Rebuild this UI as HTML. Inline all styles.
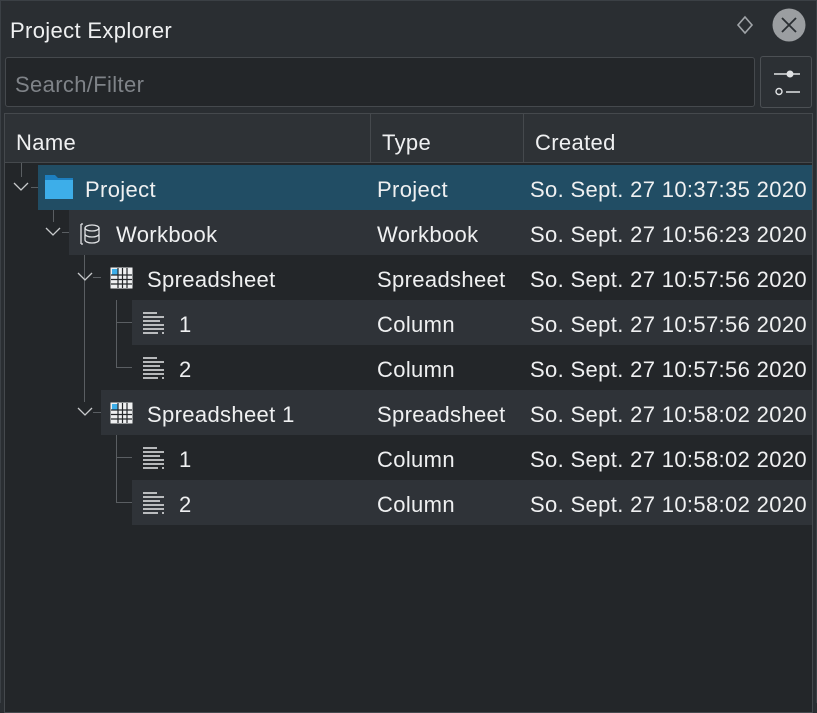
<!DOCTYPE html>
<html><head><meta charset="utf-8"><style>
*{margin:0;padding:0;box-sizing:border-box}
body{width:817px;height:703px;background:#2a2e32;font-family:"Liberation Sans","DejaVu Sans",sans-serif;color:#eff0f1;position:relative;overflow:hidden}
.a{position:absolute}
.t{font-size:22px;letter-spacing:0.35px;white-space:nowrap;line-height:45px;margin-top:2px}
.ln{position:absolute;background:#5a5e62}
</style></head><body>
<div class="a" style="left:0;top:0;width:817px;height:703px;border:1px solid #3b4045;border-bottom:none"></div>
<div class="a t" style="left:10px;top:6px">Project Explorer</div>
<svg class="a" style="left:735px;top:15px" width="20" height="20"><path d="M10 2 L17 10 L10 18 L3 10 Z" fill="none" stroke="#a0a4a8" stroke-width="1.6"/></svg>
<svg class="a" style="left:772px;top:8px" width="34" height="34"><circle cx="17" cy="17" r="16.5" fill="#9b9ea1"/><path d="M10 10 L24 24 M24 10 L10 24" stroke="#2a2e32" stroke-width="1.8"/></svg>
<div class="a" style="left:5px;top:57px;width:750px;height:50px;background:#232629;border:1px solid #45494d;border-radius:3px"></div>
<div class="a t" style="left:15px;top:60px;color:#7f8388">Search/Filter</div>
<div class="a" style="left:760px;top:56px;width:52px;height:52px;background:#2c3034;border:1px solid #4c5054;border-radius:3px"></div>
<svg class="a" style="left:770px;top:66px" width="34" height="34"><path d="M4 8 H30 M16 26 H30" stroke="#e0e2e4" stroke-width="1.6"/><circle cx="20" cy="8" r="3.5" fill="#e0e2e4"/><circle cx="9" cy="25.5" r="3" fill="none" stroke="#e0e2e4" stroke-width="1.4"/></svg>
<div class="a" style="left:4px;top:113px;width:809px;height:600px;background:#232629;border:1px solid #45494d"></div>
<div class="a" style="left:5px;top:114px;width:807px;height:49px;background:#2e3236;border-bottom:1px solid #45494d"></div>
<div class="a" style="left:370px;top:114px;width:1px;height:49px;background:#45494d"></div>
<div class="a" style="left:523px;top:114px;width:1px;height:49px;background:#45494d"></div>
<div class="a t" style="left:16px;top:118px">Name</div>
<div class="a t" style="left:382px;top:118px">Type</div>
<div class="a t" style="left:535px;top:118px">Created</div>
<div class="a" style="left:38px;top:165px;width:774px;height:45px;background:#214d64"></div>
<div class="a" style="left:69px;top:210px;width:743px;height:45px;background:#2f3338"></div>
<div class="a" style="left:132px;top:300px;width:680px;height:45px;background:#2f3338"></div>
<div class="a" style="left:101px;top:390px;width:711px;height:45px;background:#2f3338"></div>
<div class="a" style="left:132px;top:480px;width:680px;height:45px;background:#2f3338"></div>
<div class="ln" style="left:21px;top:163px;width:1px;height:14px"></div>
<div class="ln" style="left:31px;top:187px;width:7px;height:1px"></div>
<div class="ln" style="left:53px;top:210px;width:1px;height:12px"></div>
<div class="ln" style="left:62px;top:232px;width:7px;height:1px"></div>
<div class="ln" style="left:84px;top:255px;width:1px;height:147px"></div>
<div class="ln" style="left:93px;top:277px;width:8px;height:1px"></div>
<div class="ln" style="left:93px;top:412px;width:8px;height:1px"></div>
<div class="ln" style="left:116px;top:300px;width:1px;height:68px"></div>
<div class="ln" style="left:116px;top:322px;width:16px;height:1px"></div>
<div class="ln" style="left:116px;top:367px;width:16px;height:1px"></div>
<div class="ln" style="left:116px;top:435px;width:1px;height:68px"></div>
<div class="ln" style="left:116px;top:457px;width:16px;height:1px"></div>
<div class="ln" style="left:116px;top:502px;width:16px;height:1px"></div>
<svg class="a" style="left:13px;top:182px" width="16" height="10"><path d="M1 1 L8 8 L15 1" fill="none" stroke="#c8cacc" stroke-width="1.3"/></svg>
<svg class="a" style="left:45px;top:227px" width="16" height="10"><path d="M1 1 L8 8 L15 1" fill="none" stroke="#c8cacc" stroke-width="1.3"/></svg>
<svg class="a" style="left:77px;top:272px" width="16" height="10"><path d="M1 1 L8 8 L15 1" fill="none" stroke="#c8cacc" stroke-width="1.3"/></svg>
<svg class="a" style="left:77px;top:407px" width="16" height="10"><path d="M1 1 L8 8 L15 1" fill="none" stroke="#c8cacc" stroke-width="1.3"/></svg>
<svg class="a" style="left:44px;top:174px" width="30" height="26"><path d="M1 1 H11 L14 4 H29 V25 H1 Z" fill="#1d7fc0"/><rect x="1" y="6" width="28" height="19" fill="#3daee9"/></svg>
<svg class="a" style="left:79px;top:222px" width="24" height="24"><path d="M2 2 V22 M2 2 H4 M2 22 H4" stroke="#e0e2e4" stroke-width="1.3" fill="none"/><ellipse cx="13" cy="6" rx="7" ry="3" fill="none" stroke="#e0e2e4" stroke-width="1.3"/><path d="M6 6 V18 A7 3 0 0 0 20 18 V6 M6 12 A7 3 0 0 0 20 12" fill="none" stroke="#e0e2e4" stroke-width="1.3"/></svg>
<svg class="a" style="left:110px;top:267px" width="24" height="22"><rect x="0.5" y="0.5" width="22" height="21" fill="#eff0f1"/><rect x="2" y="2" width="6" height="6" fill="#3daee9"/><path d="M1 8 H22 M1 12.5 H22 M1 17 H22 M8 1 V21 M12.5 1 V21 M17 1 V21" stroke="#232629" stroke-width="1.2"/></svg>
<svg class="a" style="left:110px;top:402px" width="24" height="22"><rect x="0.5" y="0.5" width="22" height="21" fill="#eff0f1"/><rect x="2" y="2" width="6" height="6" fill="#3daee9"/><path d="M1 8 H22 M1 12.5 H22 M1 17 H22 M8 1 V21 M12.5 1 V21 M17 1 V21" stroke="#232629" stroke-width="1.2"/></svg>
<svg class="a" style="left:142px;top:311px" width="24" height="24"><path d="M1 2H15M1 6H22M1 10H18M1 14H22M1 18H22M20 22H22M1 22H16" stroke="#e8e9ea" stroke-width="1.4"/></svg>
<svg class="a" style="left:142px;top:356px" width="24" height="24"><path d="M1 2H15M1 6H22M1 10H18M1 14H22M1 18H22M20 22H22M1 22H16" stroke="#e8e9ea" stroke-width="1.4"/></svg>
<svg class="a" style="left:142px;top:446px" width="24" height="24"><path d="M1 2H15M1 6H22M1 10H18M1 14H22M1 18H22M20 22H22M1 22H16" stroke="#e8e9ea" stroke-width="1.4"/></svg>
<svg class="a" style="left:142px;top:491px" width="24" height="24"><path d="M1 2H15M1 6H22M1 10H18M1 14H22M1 18H22M20 22H22M1 22H16" stroke="#e8e9ea" stroke-width="1.4"/></svg>
<div class="a t" style="left:85px;top:165px">Project</div>
<div class="a t" style="left:116px;top:210px">Workbook</div>
<div class="a t" style="left:147px;top:255px">Spreadsheet</div>
<div class="a t" style="left:179px;top:300px">1</div>
<div class="a t" style="left:179px;top:345px">2</div>
<div class="a t" style="left:147px;top:390px">Spreadsheet 1</div>
<div class="a t" style="left:179px;top:435px">1</div>
<div class="a t" style="left:179px;top:480px">2</div>
<div class="a t" style="left:377px;top:165px">Project</div>
<div class="a t" style="left:377px;top:210px">Workbook</div>
<div class="a t" style="left:377px;top:255px">Spreadsheet</div>
<div class="a t" style="left:377px;top:300px">Column</div>
<div class="a t" style="left:377px;top:345px">Column</div>
<div class="a t" style="left:377px;top:390px">Spreadsheet</div>
<div class="a t" style="left:377px;top:435px">Column</div>
<div class="a t" style="left:377px;top:480px">Column</div>
<div class="a t" style="left:530px;top:165px">So. Sept. 27 10:37:35 2020</div>
<div class="a t" style="left:530px;top:210px">So. Sept. 27 10:56:23 2020</div>
<div class="a t" style="left:530px;top:255px">So. Sept. 27 10:57:56 2020</div>
<div class="a t" style="left:530px;top:300px">So. Sept. 27 10:57:56 2020</div>
<div class="a t" style="left:530px;top:345px">So. Sept. 27 10:57:56 2020</div>
<div class="a t" style="left:530px;top:390px">So. Sept. 27 10:58:02 2020</div>
<div class="a t" style="left:530px;top:435px">So. Sept. 27 10:58:02 2020</div>
<div class="a t" style="left:530px;top:480px">So. Sept. 27 10:58:02 2020</div>
</body></html>
